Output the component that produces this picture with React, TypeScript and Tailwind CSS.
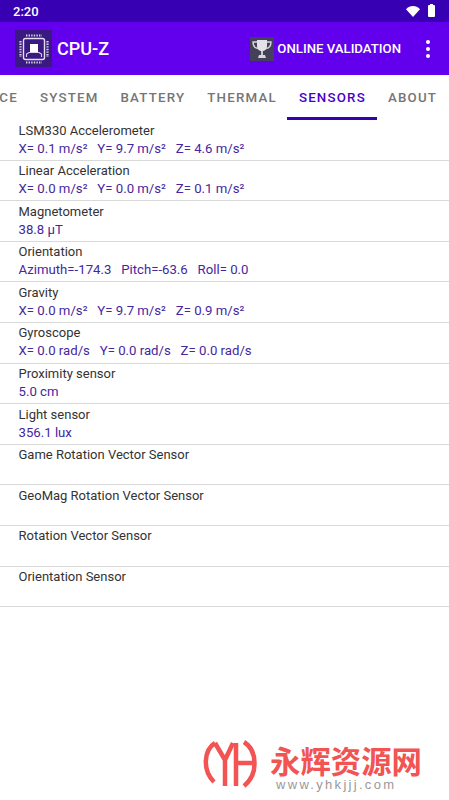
const tabs = ['DEVICE', 'SYSTEM', 'BATTERY', 'THERMAL', 'SENSORS', 'ABOUT'];

const sensors = [
  { name: 'LSM330 Accelerometer', value: 'X= 0.1 m/s²   Y= 9.7 m/s²   Z= 4.6 m/s²' },
  { name: 'Linear Acceleration', value: 'X= 0.0 m/s²   Y= 0.0 m/s²   Z= 0.1 m/s²' },
  { name: 'Magnetometer', value: '38.8 µT' },
  { name: 'Orientation', value: 'Azimuth=-174.3   Pitch=-63.6   Roll= 0.0' },
  { name: 'Gravity', value: 'X= 0.0 m/s²   Y= 9.7 m/s²   Z= 0.9 m/s²' },
  { name: 'Gyroscope', value: 'X= 0.0 rad/s   Y= 0.0 rad/s   Z= 0.0 rad/s' },
  { name: 'Proximity sensor', value: '5.0 cm' },
  { name: 'Light sensor', value: '356.1 lux' },
  { name: 'Game Rotation Vector Sensor', value: '' },
  { name: 'GeoMag Rotation Vector Sensor', value: '' },
  { name: 'Rotation Vector Sensor', value: '' },
  { name: 'Orientation Sensor', value: '' },
];

function ChipLogo() {
  return (
    <div className="w-[37px] h-[37px] bg-[#3a1a80] flex items-center justify-center">
      <svg viewBox="0 0 34 34" className="w-[34px] h-[34px]" fill="none">
        <rect x="6.5" y="6.5" width="21" height="21" rx="2" stroke="#e4dff2" strokeWidth="1.4" />
        <rect x="13" y="12" width="8" height="8" fill="#ffffff" />
        <path d="M9.5 25v-3l2.5-1.5h10l2.5 1.5v3" stroke="#d8d2ec" strokeWidth="1.1" />
        <path d="M9 3.5h16M9 30.5h16M3.5 9v16M30.5 9v16" stroke="#d8d2ec" strokeWidth="2.2" strokeDasharray="1.4 1.2" />
      </svg>
    </div>
  );
}

function Trophy() {
  return (
    <div className="w-6 h-6 bg-[#45405a] flex items-center justify-center">
      <svg viewBox="0 0 24 24" className="w-6 h-6" fill="none">
        <path d="M7 3h10v6c0 3-2 5-5 5s-5-2-5-5V3z" fill="#e4e2e6" />
        <path d="M7 5H3c0 4 1.5 6 5 6.5M17 5h4c0 4-1.5 6-5 6.5" stroke="#d8d6da" strokeWidth="1.4" />
        <path d="M11 14h2v4h-2z" fill="#c8c6ca" />
        <path d="M8 21l1-3h6l1 3z" fill="#d8d6da" />
      </svg>
    </div>
  );
}

export default function App() {
  return (
    <div className="relative w-[449px] h-[800px] overflow-hidden bg-white font-['Roboto',sans-serif]">
      {/* Status bar */}
      <div className="h-[22px] bg-[#3700b3] flex items-center justify-between pl-[13px] pr-[14px] text-white">
        <span className="text-[13px] font-medium leading-none">2:20</span>
        <div className="flex items-center gap-[8px]">
          <svg viewBox="0 0 14 11" className="w-[14px] h-[11px]">
            <path d="M0 3.2C2 1.2 4.4 0 7 0s5 1.2 7 3.2L7 11z" fill="#ffffff" />
          </svg>
          <div className="relative w-[7px] h-[12px] bg-white rounded-[1px]">
            <div className="absolute -top-[1px] left-[2px] w-[3px] h-[1px] bg-white" />
          </div>
        </div>
      </div>

      {/* App bar */}
      <div className="h-[53px] bg-[#6200ee] flex items-center pl-[15px] pr-[19px] text-white">
        <ChipLogo />
        <span className="ml-[5px] text-[18px] font-medium">CPU-Z</span>
        <div className="ml-auto flex items-center">
          <Trophy />
          <span className="ml-[3.5px] text-[13.2px] font-medium">ONLINE VALIDATION</span>
          <div className="ml-[25px] flex flex-col gap-[3px]">
            <span className="w-1 h-1 rounded-full bg-white" />
            <span className="w-1 h-1 rounded-full bg-white" />
            <span className="w-1 h-1 rounded-full bg-white" />
          </div>
        </div>
      </div>

      {/* Tabs */}
      <div className="h-[45px] flex items-center overflow-hidden">
        <div className="flex items-center shrink-0 -ml-[34px] gap-[22px]">
          {tabs.map((tab) => (
            <div key={tab} className="relative h-[45px] pt-[1px] flex items-center">
              <span className={`text-[13.3px] font-medium tracking-[1.2px] ${tab === 'SENSORS' ? 'text-[#4a00c8]' : 'text-[#757575]'}`}>
                {tab}
              </span>
              {tab === 'SENSORS' && <div className="absolute bottom-0 -left-3 -right-[11px] h-[3px] bg-[#3700b3]" />}
            </div>
          ))}
        </div>
      </div>

      {/* Sensor list */}
      <div className="flex flex-col">
        {sensors.map((s) => (
          <div key={s.name} className="h-[40.6px] pl-[18.5px] pt-[1.5px] border-b border-[#d9d9d9] leading-[18px] whitespace-pre">
            <div className="text-[13px] text-[#333333]">{s.name}</div>
            <div className="text-[13.2px] text-[#4527a0]">{s.value}</div>
          </div>
        ))}
      </div>

      {/* Watermark */}
      <div className="absolute left-[200px] top-[736px] flex items-start">
        <svg viewBox="0 0 64 56" className="w-[64px] h-[56px]" fill="none" stroke="#f25353" strokeWidth="4.5">
          <path d="M15 7C4 14 2 34 14 46" />
          <path d="M15 7l10 17 8-17M25 24v26" />
          <path d="M36 7v43M36 27h17" />
          <path d="M44 6c13 8 15 32 0 44" />
        </svg>
        <div className="ml-[6px] mt-[7px] flex flex-col">
          <span className="text-[30.4px] leading-[34px] font-bold text-[#f25353] font-['Noto_Sans_CJK_SC',sans-serif]">永辉资源网</span>
          <span className="text-[13px] leading-[15px] ml-[6px] text-[#999999] tracking-[2.3px] font-['Liberation_Sans',sans-serif]">www.yhkjjj.com</span>
        </div>
      </div>
    </div>
  );
}
